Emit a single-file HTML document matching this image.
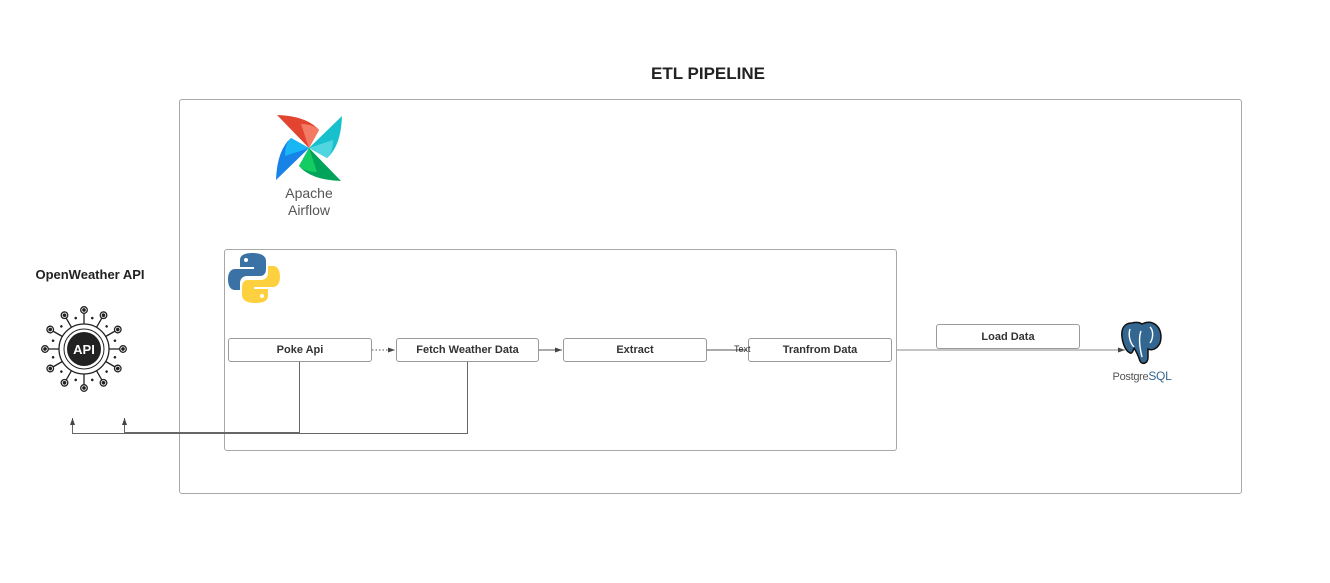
<!DOCTYPE html>
<html><head><meta charset="utf-8"><style>
html,body{margin:0;padding:0;background:#fff;}
body{width:1330px;height:583px;position:relative;overflow:hidden;font-family:"Liberation Sans",Arial,sans-serif;}
.abs{position:absolute;}
.box{position:absolute;border:1px solid #9a9a9a;border-radius:3px;background:#fff;box-sizing:border-box;font-weight:bold;font-size:11px;color:#333;display:flex;align-items:center;justify-content:center;}
</style></head><body>
<div class="abs" style="left:580px;top:64px;width:256px;text-align:center;font-weight:bold;font-size:17px;color:#222;">ETL PIPELINE</div>
<div class="abs" style="left:179px;top:99px;width:1063px;height:395px;border:1px solid #a8a8a8;border-radius:3px;box-sizing:border-box;"></div>
<div class="abs" style="left:224px;top:249px;width:673px;height:202px;border:1px solid #a8a8a8;border-radius:3px;box-sizing:border-box;"></div>

<svg class="abs" style="left:0;top:0" width="1330" height="583">
<defs><marker id="a" markerWidth="8" markerHeight="6" refX="7" refY="3" orient="auto"><path d="M0,0.5 L7,3 L0,5.5z" fill="#444"/></marker></defs>
<g stroke="#555" stroke-width="1" fill="none">
<line x1="372" y1="350" x2="395" y2="350" stroke-dasharray="1.5,2" marker-end="url(#a)"/>
<line x1="539" y1="350" x2="562" y2="350" marker-end="url(#a)"/>
<line x1="707" y1="350" x2="747" y2="350"/>
<line x1="897" y1="350" x2="1125" y2="350" stroke="#888" marker-end="url(#a)"/>
<path d="M299.5,362 V432.5 H124.5 V418" marker-end="url(#a)" stroke="#666"/>
<path d="M467.5,362 V433.5 H72.5 V418" marker-end="url(#a)" stroke="#666"/>
</g>
<!-- airflow -->
<g transform="translate(309,148)">
<g id="bl">
<path d="M0,0 L-32,-33 Q-2,-32 10,-18 Z" fill="#e2442f"/>
<path d="M0,0 L-8,-24 Q4,-24 10,-18 Z" fill="#f37a63"/>
</g>
<g transform="rotate(90)"><path d="M0,0 L-32,-33 Q-2,-32 10,-18 Z" fill="#17c0cc"/><path d="M0,0 L-8,-24 Q4,-24 10,-18 Z" fill="#4fd6de"/></g>
<g transform="rotate(180)"><path d="M0,0 L-32,-33 Q-2,-32 10,-18 Z" fill="#00a35a"/><path d="M0,0 L-8,-24 Q4,-24 10,-18 Z" fill="#13cc62"/></g>
<g transform="rotate(270)"><path d="M0,0 L-32,-33 Q-2,-32 10,-18 Z" fill="#1783e6"/><path d="M0,0 L-8,-24 Q4,-24 10,-18 Z" fill="#19b6f5"/></g>
</g>
<text x="309" y="198" text-anchor="middle" font-family="Liberation Sans" font-size="14" fill="#555">Apache</text>
<text x="309" y="215" text-anchor="middle" font-family="Liberation Sans" font-size="14" fill="#555">Airflow</text>
<!-- python -->
<g transform="translate(228,252)">
<path d="M25,1 C12,1 12,6 12,9 V15 H26 V17 H7 C2,17 0,22 0,27 C0,33 2,38 7,38 H12 V31 C12,27 15,24 19,24 H32 C36,24 38,21 38,17 V9 C38,4 33,1 25,1z" fill="#3a72a6"/>
<circle cx="18" cy="8" r="2" fill="#fff"/>
<path d="M27,51 C40,51 40,46 40,43 V37 H26 V35 H45 C50,35 52,30 52,25 C52,19 50,14 45,14 H40 V21 C40,25 37,28 33,28 H20 C16,28 14,31 14,35 V43 C14,48 19,51 27,51z" fill="#fdd040"/>
<circle cx="34" cy="44" r="2" fill="#fff"/>
</g>
<!-- API -->
<g transform="translate(84,349)" stroke="#222" fill="none" stroke-width="1.3">
<circle r="25"/><circle r="20" stroke-width="1"/>
<g id="sp">
<line x1="0" y1="-25" x2="0" y2="-36"/><circle cy="-39" r="3.3" fill="#fff"/><circle cy="-39" r="1.2" fill="#222"/>
</g>
<use href="#sp" transform="rotate(30)"/><use href="#sp" transform="rotate(60)"/><use href="#sp" transform="rotate(90)"/><use href="#sp" transform="rotate(120)"/><use href="#sp" transform="rotate(150)"/><use href="#sp" transform="rotate(180)"/><use href="#sp" transform="rotate(210)"/><use href="#sp" transform="rotate(240)"/><use href="#sp" transform="rotate(270)"/><use href="#sp" transform="rotate(300)"/><use href="#sp" transform="rotate(330)"/>
<g fill="#222" stroke="none">
<circle cx="0" cy="-32" r="1.3" transform="rotate(15)"/><circle cx="0" cy="-32" r="1.3" transform="rotate(45)"/><circle cx="0" cy="-32" r="1.3" transform="rotate(75)"/><circle cx="0" cy="-32" r="1.3" transform="rotate(105)"/><circle cx="0" cy="-32" r="1.3" transform="rotate(135)"/><circle cx="0" cy="-32" r="1.3" transform="rotate(165)"/><circle cx="0" cy="-32" r="1.3" transform="rotate(195)"/><circle cx="0" cy="-32" r="1.3" transform="rotate(225)"/><circle cx="0" cy="-32" r="1.3" transform="rotate(255)"/><circle cx="0" cy="-32" r="1.3" transform="rotate(285)"/><circle cx="0" cy="-32" r="1.3" transform="rotate(315)"/><circle cx="0" cy="-32" r="1.3" transform="rotate(345)"/>
<circle r="17" fill="#222"/>
</g>
</g>
<text x="84" y="354" text-anchor="middle" font-family="Liberation Sans" font-weight="bold" font-size="13" fill="#fff">API</text>
<text x="90" y="279" text-anchor="middle" font-family="Liberation Sans" font-weight="bold" font-size="13" fill="#222">OpenWeather API</text>
<!-- postgres -->
<g transform="translate(1120,321)">
<path d="M12,2 C4,2 1,8 2,16 C3,24 6,30 10,32 C12,33 13,30 14,27 C16,30 18,34 20,40 C22,44 28,43 28,36 V28 C32,30 37,28 40,22 C42,16 41,8 36,4 C31,0 26,1 22,3 C19,1 16,1 12,2z" fill="#336791" stroke="#111" stroke-width="1.5"/>
<path d="M10,8 C8,14 10,22 14,26 M30,6 C34,10 33,18 30,22 M21,10 C18,18 20,28 22,36" stroke="#fff" stroke-width="1.4" fill="none"/>
</g>
<text x="1142" y="380" text-anchor="middle" font-family="Liberation Sans" font-size="11" fill="#555" letter-spacing="-0.3">Postgre<tspan fill="#336791" font-size="12">SQL</tspan></text>
</svg>

<div class="box" style="left:228px;top:338px;width:144px;height:24px;">Poke Api</div>
<div class="box" style="left:396px;top:338px;width:143px;height:24px;">Fetch Weather Data</div>
<div class="box" style="left:563px;top:338px;width:144px;height:24px;">Extract</div>
<div class="box" style="left:748px;top:338px;width:144px;height:24px;">Tranfrom Data</div>
<div class="box" style="left:936px;top:324px;width:144px;height:25px;">Load Data</div>
<div class="abs" style="left:734px;top:344px;font-size:9px;color:#333;">Text</div>
</body></html>
